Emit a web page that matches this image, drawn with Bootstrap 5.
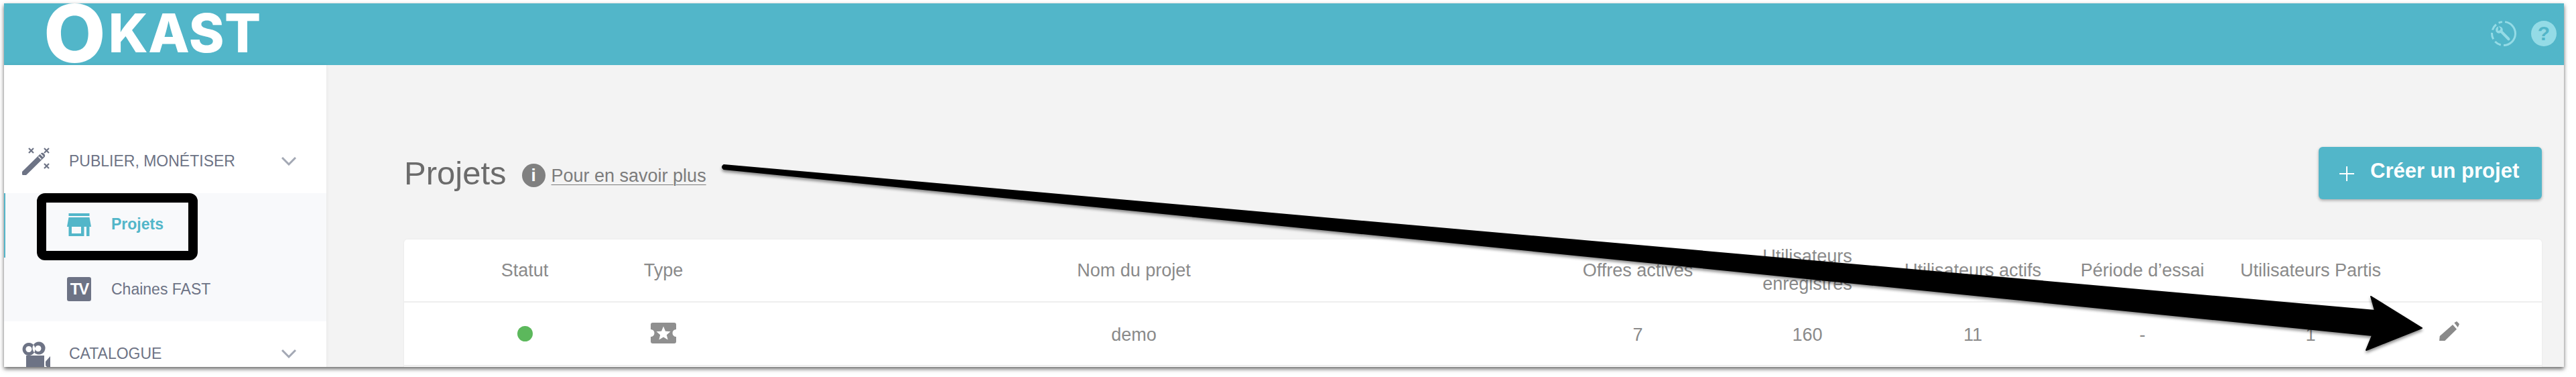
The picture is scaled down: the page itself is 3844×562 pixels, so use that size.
<!DOCTYPE html>
<html lang="fr">
<head>
  <meta charset="UTF-8" />
  <meta name="viewport" content="width=device-width, initial-scale=1" />
  <title>Okast - Projets</title>
  <link href="https://cdn.jsdelivr.net/npm/bootstrap@5.3.0/dist/css/bootstrap.min.css" rel="stylesheet" />
  <style>
    html, body {
      height: 562px;
      overflow: hidden;
      background: #fff;
    }
    body {
      padding: 5px 18px 15px 6px;
      font-family: "Liberation Sans", Arial, sans-serif;
      position: relative;
    }
    .app-window {
      height: 542px;
      box-shadow: 0 3px 6px rgba(0, 0, 0, .6);
      overflow: hidden;
    }
    .top-bar {
      height: 92px;
      flex: none;
      background: #52b6c9;
      padding: 0 11px 0 59px;
    }
    .logo-text {
      color: #fff;
      font-family: Inter, "Liberation Sans", sans-serif;
      font-weight: 800;
      line-height: .7;
    }
    .logo-big { font-size: 120px; margin-top: -3px; }
    .logo-rest { font-size: 80px; letter-spacing: .5px; margin-left: 4px; margin-top: -5px; }
    .top-icon { width: 38px; height: 38px; margin-top: -3px; }
    .help-dot {
      background: #94dbe6;
      color: #52b6c9;
      font-size: 30px;
      font-weight: 700;
      line-height: 1;
      margin-left: 22px;
    }
    .side-panel {
      width: 481px;
      flex: none;
      padding-top: 95px;
      box-shadow: 0 0 5px rgba(0, 0, 0, .07);
      z-index: 1;
    }
    .side-row {
      height: 96px;
      flex-wrap: nowrap;
      padding: 0 45px 0 27px;
      color: #6d7385;
      font-size: 23px;
    }
    .side-row .nav-ico { width: 42px; height: 42px; margin-right: 28px; flex: none; }
    .side-chev { width: 22px; height: 13px; margin-left: auto; flex: none; }
    .side-sub { background: #f8f9fb; height: 191px; }
    .sub-row {
      height: 95.5px;
      padding-left: 94px;
      color: #6d7385;
      font-size: 23px;
    }
    .sub-row.is-active {
      padding-left: 92px;
      padding-top: 4px;
      border-left: 2px solid #52b6c9;
      color: #52b6c9;
      font-weight: 700;
    }
    .sub-ico { width: 36px; height: 36px; margin-right: 30px; flex: none; }
    .tv-box {
      background: #6d7385;
      color: #fff;
      border-radius: 3px;
      font-size: 24px;
      font-weight: 700;
      letter-spacing: -2px;
      line-height: 1;
    }
    .page-main {
      background: #f3f3f3;
      padding: 122px 33px 0 116px;
      min-width: 0;
    }
    .page-head { height: 78px; }
    .page-title {
      font-family: "Liberation Sans", Arial, sans-serif;
      font-size: 49px;
      font-weight: 400;
      color: #6b6b6b;
      margin: 0 23px 0 0;
      line-height: 1;
    }
    .info-dot {
      width: 35px;
      height: 35px;
      background: #808080;
      color: #fff;
      font-size: 26px;
      font-weight: 700;
      line-height: 1;
      margin: 6px 9px 0 0;
    }
    .more-link {
      color: #7c7c7c;
      font-size: 27px;
      text-underline-offset: 4px;
      text-decoration-thickness: 1px;
      margin-top: 8px;
    }
    .create-btn {
      width: 333px;
      height: 78px;
      background: #52b6c9;
      color: #fff;
      border: 0;
      border-radius: 6px;
      font-size: 31px;
      font-weight: 700;
      box-shadow: 0 2px 4px rgba(0, 0, 0, .3);
      padding: 0 0 5px 31px;
    }
    .create-btn svg { width: 22px; height: 22px; margin: 6px 24px 0 0; }
    .data-card {
      margin-top: 60px;
      height: 300px;
      border: 0;
      border-radius: 5px;
      box-shadow: 0 0 3px rgba(0, 0, 0, .06);
      overflow: hidden;
    }
    .project-grid {
      table-layout: fixed;
      width: 3190px;
      margin: 0;
    }
    .project-grid th, .project-grid td {
      color: #8a8a8a;
      font-size: 27px;
      font-weight: 400;
      line-height: 41px;
      text-align: center;
      vertical-align: middle;
      padding: 4px 0;
      border-bottom: 2px solid #eeeeee;
    }
    .project-grid th { height: 93px; }
    .project-grid td { height: 95px; padding-top: 7px; }
    .project-grid th:first-child, .project-grid td:first-child { padding-left: 73px; }
    .project-grid td:last-child { text-align: left; padding-left: 50px; }
    .w-a { width: 287px; } .w-b { width: 200px; } .w-c { width: 1204px; }
    .w-d { width: 300px; } .w-e { width: 206px; } .w-f { width: 288px; }
    .w-g { width: 218px; } .w-h { width: 284px; } .w-i { width: 203px; }
    .state-dot { width: 23px; height: 23px; background: #5cb85c; margin-top: -6px; }
    .ticket-ico { width: 38px; height: 31px; margin-top: -8px; }
    .edit-ico { width: 30px; height: 29px; margin-top: -13px; }
    .annotation-layer {
      position: absolute;
      left: 0;
      top: 0;
      width: 3844px;
      height: 562px;
      pointer-events: none;
      z-index: 5;
    }
  </style>
</head>
<body>
  <div class="app-window d-flex flex-column bg-white">
    <header class="top-bar d-flex align-items-center">
      <span class="logo-text logo-big">O</span>
      <span class="logo-text logo-rest">KAST</span>
      <svg class="top-icon ms-auto" viewBox="0 0 38 38">
        <circle cx="19" cy="19" r="17.5" fill="none" stroke="#94dbe6" stroke-width="3" pathLength="100" stroke-dasharray="48 4 9 4 9 4 9 4 5 4" stroke-dashoffset="-2" transform="rotate(-90 19 19)" />
        <path d="M11 8.500a5.600 5.600 0 0 0-3.600 7.200 5.600 5.600 0 0 0 6.500 2.600l.6-.2 10.500 10.600a2 2 0 0 0 2.900-2.900L17.500 15.300l.2-.7a5.600 5.600 0 0 0-6.200-6.400l3 3.300-1 2.800-3 .6z" fill="#94dbe6" />
      </svg>
      <span class="top-icon help-dot rounded-circle d-flex align-items-center justify-content-center">?</span>
    </header>
    <div class="d-flex flex-grow-1" style="min-height:0">
      <aside class="side-panel bg-white">
        <nav class="nav flex-column flex-nowrap">
          <a class="nav-link side-row d-flex align-items-center" href="#">
            <svg class="nav-ico" viewBox="0 0 42 42">
              <path d="M3.500 39 30 13" stroke="#6d7385" stroke-width="8" stroke-linecap="round" fill="none" />
              <path d="M24.500 14.500l4 4" stroke="#fff" stroke-width="1.500" />
              <path d="M26.500 9.500l5 5" stroke="#fff" stroke-width="1.500" />
              <path d="M10 2l7 7M17 2l-7 7M33 2l7 7M40 2l-7 7M33 25l7 7M40 25l-7 7" stroke="#6d7385" stroke-width="2.200" fill="none" />
            </svg>
            <span>PUBLIER, MONÉTISER</span>
            <svg class="side-chev" viewBox="0 0 22 13"><path d="M1 1l10 10L21 1" fill="none" stroke="#a3a8b4" stroke-width="3" /></svg>
          </a>
          <div class="side-sub">
            <a class="nav-link sub-row is-active d-flex align-items-center" href="#">
              <svg class="sub-ico" viewBox="0 0 36 36">
                <path d="M2.500 2h31v4h-31zM2.500 8h31L36 22H0zM2.500 22H7v7h14v-7h4.500v14h-23zM29 22h4.500v14H29z" fill="#52b6c9" />
                <path d="M7 29h14v3H7z" fill="#f8f9fb" />
              </svg>
              <span>Projets</span>
            </a>
            <a class="nav-link sub-row d-flex align-items-center" href="#">
              <span class="sub-ico tv-box d-flex align-items-center justify-content-center">TV</span>
              <span>Chaines FAST</span>
            </a>
          </div>
          <a class="nav-link side-row d-flex align-items-center" href="#">
            <svg class="nav-ico" viewBox="0 0 42 42" style="margin-top:4px">
              <path fill-rule="evenodd" d="M10 3a9.500 9.500 0 1 0 .1 0zM10 8a4.500 4.500 0 1 1-.1 0zM25 1.500a9.500 9.500 0 1 0 .1 0zM24 7a4.500 4.500 0 1 1-.1 0z" fill="#6d7385" />
              <path d="M6 22h27v22H6zM35 31l7-8v21l-7-7z" fill="#6d7385" />
            </svg>
            <span>CATALOGUE</span>
            <svg class="side-chev" viewBox="0 0 22 13"><path d="M1 1l10 10L21 1" fill="none" stroke="#a3a8b4" stroke-width="3" /></svg>
          </a>
        </nav>
      </aside>
      <main class="page-main flex-grow-1">
        <div class="page-head d-flex align-items-center justify-content-between">
          <div class="d-flex align-items-center">
            <h1 class="page-title">Projets</h1>
            <span class="info-dot rounded-circle d-flex align-items-center justify-content-center">i</span>
            <a class="more-link" href="#">Pour en savoir plus</a>
          </div>
          <button class="create-btn btn d-flex align-items-center" type="button">
            <svg viewBox="0 0 22 22"><path d="M11 0v22M0 11h22" stroke="#fff" stroke-width="2" /></svg>
            <span>Créer un projet</span>
          </button>
        </div>
        <div class="data-card card">
          <table class="project-grid table">
            <colgroup>
              <col class="w-a" /><col class="w-b" /><col class="w-c" /><col class="w-d" /><col class="w-e" /><col class="w-f" /><col class="w-g" /><col class="w-h" /><col class="w-i" />
            </colgroup>
            <thead>
              <tr>
                <th>Statut</th>
                <th>Type</th>
                <th>Nom du projet</th>
                <th>Offres actives</th>
                <th>Utilisateurs enregistrés</th>
                <th>Utilisateurs actifs</th>
                <th>Période d’essai</th>
                <th>Utilisateurs Partis</th>
                <th></th>
              </tr>
            </thead>
            <tbody>
              <tr>
                <td><span class="state-dot rounded-circle d-inline-block align-middle"></span></td>
                <td>
                  <svg class="ticket-ico align-middle" viewBox="0 0 38 31">
                    <path fill="#8f8f8f" d="M3 0h32a3 3 0 0 1 3 3v7a5.500 5.500 0 0 0 0 11v7a3 3 0 0 1-3 3H3a3 3 0 0 1-3-3v-7a5.500 5.500 0 0 0 0-11V3a3 3 0 0 1 3-3z" />
                    <path fill="#fff" d="M19 5.500l3 7.200 7.500.6-5.700 4.900 1.800 7.300-6.600-4-6.600 4 1.800-7.300-5.700-4.900 7.500-.6z" />
                  </svg>
                </td>
                <td>demo</td>
                <td>7</td>
                <td>160</td>
                <td>11</td>
                <td>-</td>
                <td>1</td>
                <td>
                  <svg class="edit-ico align-middle" viewBox="0 0 30 29">
                    <path fill="#8a8a8a" d="M.7 22 20 5l6 6.700L8.300 29H0zM22.300 2.300 26 0l4 4-2.300 5z" />
                  </svg>
                </td>
              </tr>
              <tr><td colspan="9"></td></tr>
            </tbody>
          </table>
        </div>
      </main>
    </div>
  </div>

  <!-- callouts drawn over the page -->
  <svg class="annotation-layer" viewBox="0 0 3844 562">
    <defs>
      <filter id="callout-shadow" x="-2%" y="-20%" width="104%" height="140%">
        <feDropShadow dx="0" dy="3" stdDeviation="2" flood-color="#000" flood-opacity=".45" />
      </filter>
    </defs>
    <rect x="62" y="295" width="226" height="86" rx="5" fill="none" stroke="#000" stroke-width="14" />
    <path filter="url(#callout-shadow)" fill="#000" stroke="#000" stroke-width="2" stroke-linejoin="round" d="M1080 246 3544 463 3538 442 3614 489 3531 522 3540 500 1080 252Q1076 249 1080 246z" />
  </svg>
  <script src="https://cdn.jsdelivr.net/npm/bootstrap@5.3.0/dist/js/bootstrap.bundle.min.js"></script>
</body>
</html>
